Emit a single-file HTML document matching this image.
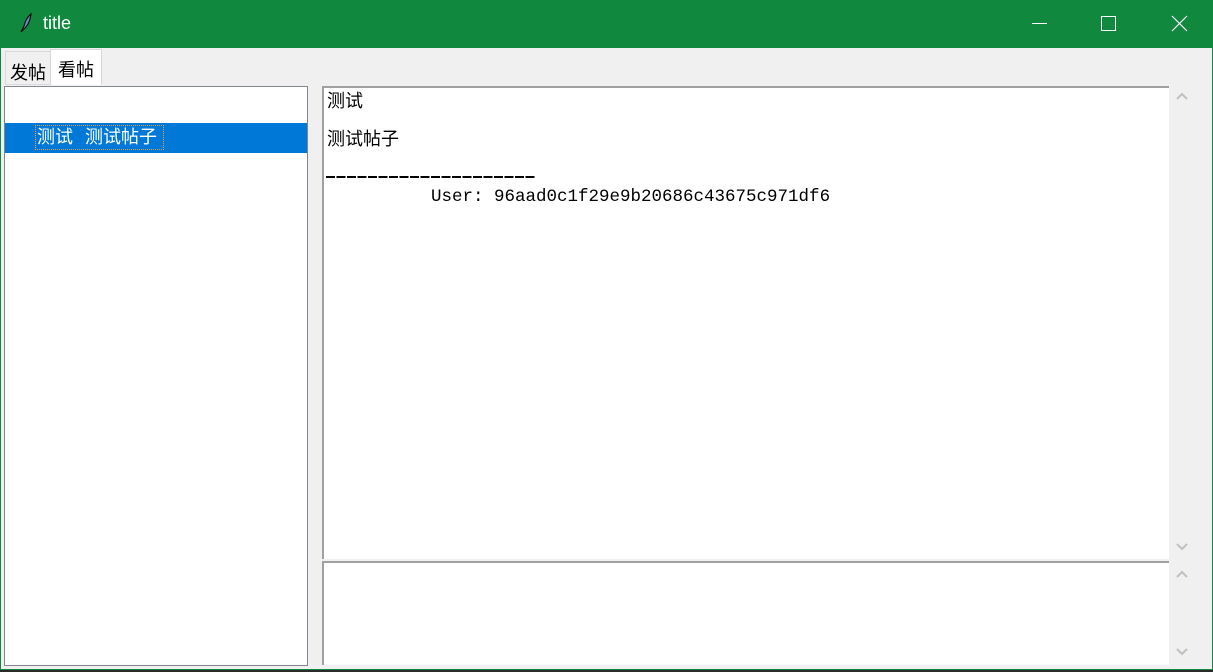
<!DOCTYPE html>
<html><head><meta charset="utf-8"><style>
*{margin:0;padding:0;box-sizing:border-box}
body{width:1213px;height:672px;background:#2a2a2a;position:relative;overflow:hidden;font-family:"Liberation Sans","Noto Sans CJK SC",sans-serif}
.win{position:absolute;left:0;top:0;width:1213px;height:670px;background:#f0f0f0;border:1px solid #10893e;border-top:none}
.tb{position:absolute;left:0;top:0;width:1213px;height:48px;background:#10893e;color:#fff}
.abs{position:absolute}
.cjk{font-family:"Liberation Sans","Noto Sans CJK SC",sans-serif}
.mono{font-family:"Liberation Mono","Noto Sans CJK SC",monospace}
</style></head><body>
<div class="win">
<div class="tb">
<svg class="abs" style="left:17px;top:12px" width="16" height="22" viewBox="0 0 16 22"><path d="M3 20 L6 14 Q8 6 13 2 Q12 10 8 15 Z" fill="#6a8fd0" stroke="#111" stroke-width="1.2"/></svg>
<div class="abs" style="left:42px;top:13px;font-size:18px">title</div>
<div class="abs" style="left:1031px;top:23px;width:15px;height:1px;background:#fff"></div>
<div class="abs" style="left:1100px;top:16px;width:15px;height:15px;border:1px solid #fff"></div>
<svg class="abs" style="left:1170px;top:15px" width="17" height="17"><path d="M1 1L16 16M16 1L1 16" stroke="#fff" stroke-width="1.2"/></svg>
</div>
<div class="abs cjk" style="left:4px;top:51px;width:46px;height:34px;border:1px solid #d9d9d9;background:#f0f0f0;font-size:18px;padding:7px 0 0 4px;color:#000">发帖</div>
<div class="abs cjk" style="left:49px;top:49px;width:52px;height:36px;background:#fff;border:1px solid #d9d9d9;border-bottom:none;font-size:18px;padding:6px 0 0 7px;color:#000">看帖</div>
<div class="abs" style="left:3px;top:86px;width:304px;height:580px;background:#fff;border:1px solid #828790"></div>
<div class="abs" style="left:4px;top:123px;width:302px;height:30px;background:#0078d7"></div>
<div class="abs" style="left:34px;top:125px;width:129px;height:25px;border:1px dotted #d9a050"></div>
<div class="abs cjk" style="left:36px;top:126px;color:#fff;font-size:18px;line-height:22px">测试</div>
<div class="abs cjk" style="left:84px;top:126px;color:#fff;font-size:18px;line-height:22px">测试帖子</div>
<div class="abs" style="left:321px;top:86px;width:848px;height:473px;background:#fff;border-left:2px solid #a0a0a0;border-top:2px solid #a0a0a0"></div>
<div class="abs" style="left:321px;top:561px;width:848px;height:104px;background:#fff;border-left:2px solid #a0a0a0;border-top:2px solid #a0a0a0"></div>
<div class="abs" style="left:1168px;top:86px;width:43px;height:579px;background:#f0f0f0"></div>
<svg class="abs" style="left:1174px;top:92px" width="14" height="10"><path d="M2 7L7 2L12 7" stroke="#c0c0c0" stroke-width="2" fill="none"/></svg>
<svg class="abs" style="left:1174px;top:542px" width="14" height="10"><path d="M2 2L7 7L12 2" stroke="#c0c0c0" stroke-width="2" fill="none"/></svg>
<svg class="abs" style="left:1174px;top:570px" width="14" height="10"><path d="M2 7L7 2L12 7" stroke="#c0c0c0" stroke-width="2" fill="none"/></svg>
<svg class="abs" style="left:1174px;top:647px" width="14" height="10"><path d="M2 2L7 7L12 2" stroke="#c0c0c0" stroke-width="2" fill="none"/></svg>
<div class="abs cjk" style="left:326px;top:87px;font-size:18px;color:#000">测试</div>
<div class="abs cjk" style="left:326px;top:125px;font-size:18px;color:#000">测试帖子</div>
<div class="abs" style="left:325px;top:176px;width:209px;height:2px;background:repeating-linear-gradient(90deg,#000 0 9px,transparent 9px 10.5px)"></div>
<div class="abs mono" style="left:430px;top:187px;font-size:17.5px;color:#000;white-space:pre">User: 96aad0c1f29e9b20686c43675c971df6</div>
</div>
</body></html>
